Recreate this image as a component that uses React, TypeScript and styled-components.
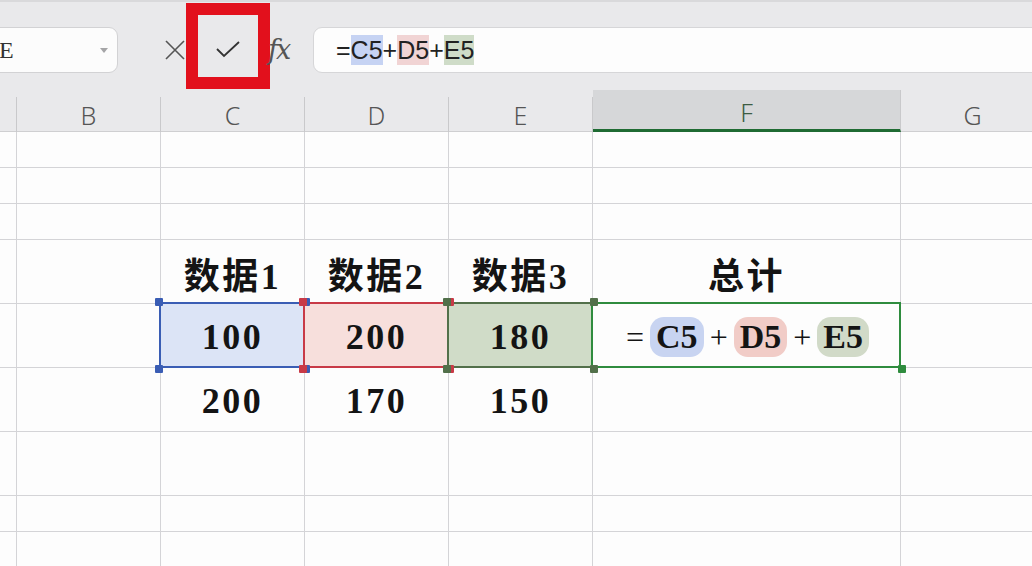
import styled, { createGlobalStyle } from 'styled-components';

const GlobalStyle = createGlobalStyle`
  body {
    margin: 0;
    background: #ffffff;
    overflow: hidden;
  }
`;

const COLS = '17px 144px 144px 144px 144px 308px 144px';
const ROW_HEIGHTS = [36, 36, 36, 64, 64, 64, 64, 36, 36];
const LETTERS = ['', 'B', 'C', 'D', 'E', 'F', 'G'];

type Tone = 'blue' | 'red' | 'green';

const tones: Record<Tone, { fill: string; line: string; chip: string; bar: string }> = {
  blue: { fill: '#dce4f6', line: '#3a5db4', chip: '#c8d4f1', bar: '#c6d3f3' },
  red: { fill: '#f7dfdc', line: '#c83a47', chip: '#f1ccc7', bar: '#f1d4d4' },
  green: { fill: '#d0dcc8', line: '#52704a', chip: '#d1dac8', bar: '#cfdcc8' },
};

const Page = styled.div`
  width: 1032px;
  height: 566px;
  overflow: hidden;
  background: #fdfdfd;
`;

const Toolbar = styled.div`
  height: 90px;
  display: flex;
  align-items: center;
  background: #e9e9eb;
  border-top: 2px solid #d9d9db;
  box-sizing: border-box;
`;

const NameBox = styled.div`
  margin-left: -10px;
  margin-top: 8px;
  width: 128px;
  height: 46px;
  box-sizing: border-box;
  border: 1px solid #d2d2d4;
  border-radius: 9px;
  background: #fcfcfc;
  display: flex;
  align-items: center;
  justify-content: space-between;
  padding: 0 9px 0 8px;
  font: 24px 'Liberation Serif', serif;
  color: #333;
`;

const Caret = styled.span`
  width: 0;
  height: 0;
  border-left: 4px solid transparent;
  border-right: 4px solid transparent;
  border-top: 5px solid #a5a5a7;
`;

const IconSlot = styled.div`
  margin-left: 46px;
  margin-top: 8px;
  width: 22px;
  height: 22px;
  display: flex;
  align-items: center;
  justify-content: center;
`;

const ConfirmFrame = styled.div`
  width: 84px;
  height: 86px;
  box-sizing: border-box;
  border: 12px solid #e2101c;
  display: flex;
  align-items: center;
  justify-content: center;
  padding-top: 6px;
`;

const FxLabel = styled.span`
  margin-left: -2px;
  margin-top: 6px;
  width: 28px;
  font: italic 27px 'DejaVu Serif', serif;
  color: #555;
  letter-spacing: -2px;
`;

const FormulaInput = styled.div`
  margin-left: 17px;
  margin-right: -20px;
  margin-top: 8px;
  flex: 1;
  height: 46px;
  box-sizing: border-box;
  border: 1px solid #d6d6d8;
  border-radius: 9px;
  background: #fdfdfd;
  display: flex;
  align-items: center;
  padding-left: 22px;
  font: 25px 'Liberation Sans', sans-serif;
  color: #222;
`;

const BarRef = styled.span<{ $tone: Tone }>`
  display: inline-block;
  line-height: 30px;
  background: ${({ $tone }) => tones[$tone].bar};
`;

const HeaderRow = styled.div`
  height: 42px;
  display: grid;
  grid-template-columns: ${COLS};
  align-items: end;
  background: #e9e9eb;
  border-bottom: 1px solid #cfcfd1;
  box-sizing: border-box;
`;

const HeaderCell = styled.div<{ $active?: boolean }>`
  height: ${({ $active }) => ($active ? '42px' : '35px')};
  box-sizing: border-box;
  border-right: 1px solid #c9c9cb;
  background: ${({ $active }) => ($active ? '#d6d7d9' : 'transparent')};
  border-bottom: ${({ $active }) => ($active ? '3px solid #1f6b33' : 'none')};
  display: flex;
  align-items: center;
  justify-content: center;
  padding-top: ${({ $active }) => ($active ? '4px' : '0')};
  font: 300 25px 'Noto Sans', sans-serif;
  color: ${({ $active }) => ($active ? '#3d5c43' : '#555')};
`;

const Sheet = styled.div`
  display: grid;
  grid-template-columns: ${COLS};
  grid-template-rows: ${ROW_HEIGHTS.map((h) => `${h}px`).join(' ')};
`;

const Cell = styled.div<{ $tone?: Tone }>`
  position: relative;
  box-sizing: border-box;
  border-right: 1px solid #d4d4d7;
  border-bottom: 1px solid #d4d4d7;
  background: ${({ $tone }) => ($tone ? tones[$tone].fill : 'transparent')};
  display: flex;
  align-items: center;
  justify-content: center;
  padding-top: 3px;
  font: bold 36px 'Liberation Serif', 'Noto Sans CJK SC', serif;
  color: #141414;
  letter-spacing: 2.5px;
`;

const Outline = styled.div<{ $color: string }>`
  position: absolute;
  inset: -2px -1px -1px -2px;
  border: 2px solid ${({ $color }) => $color};
  pointer-events: none;
`;

const Handle = styled.span<{ $color: string; $x: 'left' | 'right'; $y: 'top' | 'bottom' }>`
  position: absolute;
  ${({ $x }) => $x}: -6px;
  ${({ $y }) => $y}: -6px;
  width: 8px;
  height: 8px;
  border-radius: 1px;
  background: ${({ $color }) => $color};
  z-index: 2;
`;

const Formula = styled.div`
  display: flex;
  align-items: center;
  gap: 4px;
  font: bold 34px 'Liberation Serif', serif;
  color: #141414;
  letter-spacing: 0;
`;

const Op = styled.span`
  font: 32px 'Liberation Serif', serif;
  padding: 0 2px;
`;

const Chip = styled.span<{ $tone: Tone }>`
  display: inline-flex;
  align-items: center;
  height: 40px;
  padding: 0 6px;
  border-radius: 14px;
  background: ${({ $tone }) => tones[$tone].chip};
`;

const CancelIcon = () => (
  <svg width="22" height="22" viewBox="0 0 22 22">
    <path d="M2 2 L20 20 M20 2 L2 20" stroke="#555" strokeWidth="1.6" fill="none" />
  </svg>
);

const CheckIcon = () => (
  <svg width="26" height="20" viewBox="0 0 26 20">
    <path d="M2 10 L9 17 L24 3" stroke="#333" strokeWidth="1.8" fill="none" />
  </svg>
);

const Corners = ({ color }: { color: string }) => (
  <>
    <Handle $color={color} $x="left" $y="top" />
    <Handle $color={color} $x="left" $y="bottom" />
    <Handle $color={color} $x="right" $y="top" />
    <Handle $color={color} $x="right" $y="bottom" />
  </>
);

type CellData = { text?: string; tone?: Tone; formula?: boolean };

const rows: CellData[][] = ROW_HEIGHTS.map(() => LETTERS.map(() => ({})));
rows[3][2] = { text: '数据1' };
rows[3][3] = { text: '数据2' };
rows[3][4] = { text: '数据3' };
rows[3][5] = { text: '总计' };
rows[4][2] = { text: '100', tone: 'blue' };
rows[4][3] = { text: '200', tone: 'red' };
rows[4][4] = { text: '180', tone: 'green' };
rows[4][5] = { formula: true };
rows[5][2] = { text: '200' };
rows[5][3] = { text: '170' };
rows[5][4] = { text: '150' };

export default function App() {
  return (
    <Page>
      <GlobalStyle />
      <Toolbar>
        <NameBox>
          <span>E</span>
          <Caret />
        </NameBox>
        <IconSlot>
          <CancelIcon />
        </IconSlot>
        <ConfirmFrame>
          <CheckIcon />
        </ConfirmFrame>
        <FxLabel>fx</FxLabel>
        <FormulaInput>
          =<BarRef $tone="blue">C5</BarRef>+<BarRef $tone="red">D5</BarRef>+
          <BarRef $tone="green">E5</BarRef>
        </FormulaInput>
      </Toolbar>

      <HeaderRow>
        {LETTERS.map((l, i) => (
          <HeaderCell key={i} $active={l === 'F'}>
            {l}
          </HeaderCell>
        ))}
      </HeaderRow>

      <Sheet>
        {rows.map((row, r) =>
          row.map((cell, c) => (
            <Cell key={`${r}-${c}`} $tone={cell.tone}>
              {cell.text}
              {cell.formula && (
                <Formula>
                  <Op>=</Op>
                  <Chip $tone="blue">C5</Chip>
                  <Op>+</Op>
                  <Chip $tone="red">D5</Chip>
                  <Op>+</Op>
                  <Chip $tone="green">E5</Chip>
                </Formula>
              )}
              {cell.tone && (
                <>
                  <Outline $color={tones[cell.tone].line} />
                  <Corners color={tones[cell.tone].line} />
                </>
              )}
              {cell.formula && (
                <>
                  <Outline $color="#2f8c3e" />
                  <Handle $color="#2f8c3e" $x="right" $y="bottom" />
                </>
              )}
            </Cell>
          ))
        )}
      </Sheet>
    </Page>
  );
}
